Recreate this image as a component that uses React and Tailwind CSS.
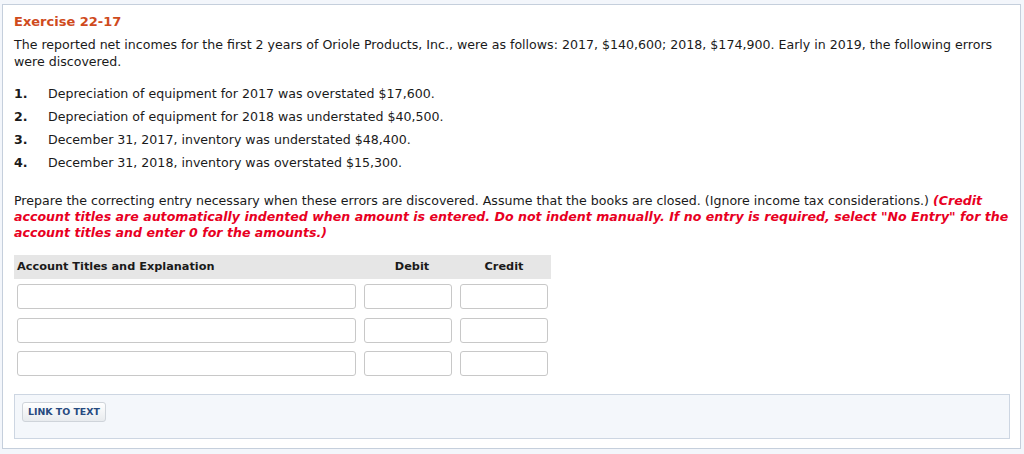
const errors = [
  'Depreciation of equipment for 2017 was overstated $17,600.',
  'Depreciation of equipment for 2018 was understated $40,500.',
  'December 31, 2017, inventory was understated $48,400.',
  'December 31, 2018, inventory was overstated $15,300.',
];

function EntryRow() {
  return (
    <div className="flex gap-2 px-[3px]">
      <input className="w-[339px] h-[25px] bg-white border border-[#c8c8c8] rounded-[3px]" />
      <input className="w-[88px] h-[25px] bg-white border border-[#c8c8c8] rounded-[3px]" />
      <input className="w-[88px] h-[25px] bg-white border border-[#c8c8c8] rounded-[3px]" />
    </div>
  );
}

export default function App() {
  return (
    <div className="w-[1024px] h-[454px] bg-[#f3f6fb] pt-1 pl-[2px] font-['DejaVu_Sans',Verdana,sans-serif] text-[12.6px] text-[#1a1a1a]">
      <div className="w-[1019px] h-[445px] bg-white border border-[#c5cfdc] px-[11px] pt-[8px]">
        <h2 className="text-[#cf4b1d] font-bold text-[13px] leading-[18px]">Exercise 22-17</h2>
        <p className="mt-[5px] leading-[17px]">
          The reported net incomes for the first 2 years of Oriole Products, Inc., were as follows: 2017, $140,600; 2018, $174,900. Early in 2019, the following errors were discovered.
        </p>

        <ol className="mt-[15px] flex flex-col gap-[6px]">
          {errors.map((e, i) => (
            <li key={i} className="flex leading-[17px]">
              <span className="w-[34px] font-bold">{i + 1}.</span>
              <span>{e}</span>
            </li>
          ))}
        </ol>

        <p className="mt-[22px] leading-[16px]">
          Prepare the correcting entry necessary when these errors are discovered. Assume that the books are closed. (Ignore income tax considerations.){' '}
          <span className="text-[#e8001f] font-bold italic">
            (Credit account titles are automatically indented when amount is entered. Do not indent manually. If no entry is required, select "No Entry" for the account titles and enter 0 for the amounts.)
          </span>
        </p>

        <div className="mt-[14px] w-[537px]">
          <div className="flex items-center h-[24px] bg-[#e6e6e6] text-[11.3px] font-bold px-[3px]">
            <span className="w-[347px]">Account Titles and Explanation</span>
            <span className="w-[96px] text-center">Debit</span>
            <span className="w-[88px] text-center">Credit</span>
          </div>
          <div className="mt-[5px] flex flex-col gap-[8.5px]">
            <EntryRow />
            <EntryRow />
            <EntryRow />
          </div>
        </div>

        <div className="mt-[18px] h-[45px] w-[996px] bg-[#f4f7fb] border border-[#cdd6e2] pl-[7px] pt-[7px]">
          <button className="h-[20px] px-[5px] rounded-[3px] border border-[#cfd4da] bg-gradient-to-b from-white to-[#e8ebee] text-[9.4px] font-bold text-[#274a80] leading-none">
            LINK TO TEXT
          </button>
        </div>
      </div>
    </div>
  );
}
